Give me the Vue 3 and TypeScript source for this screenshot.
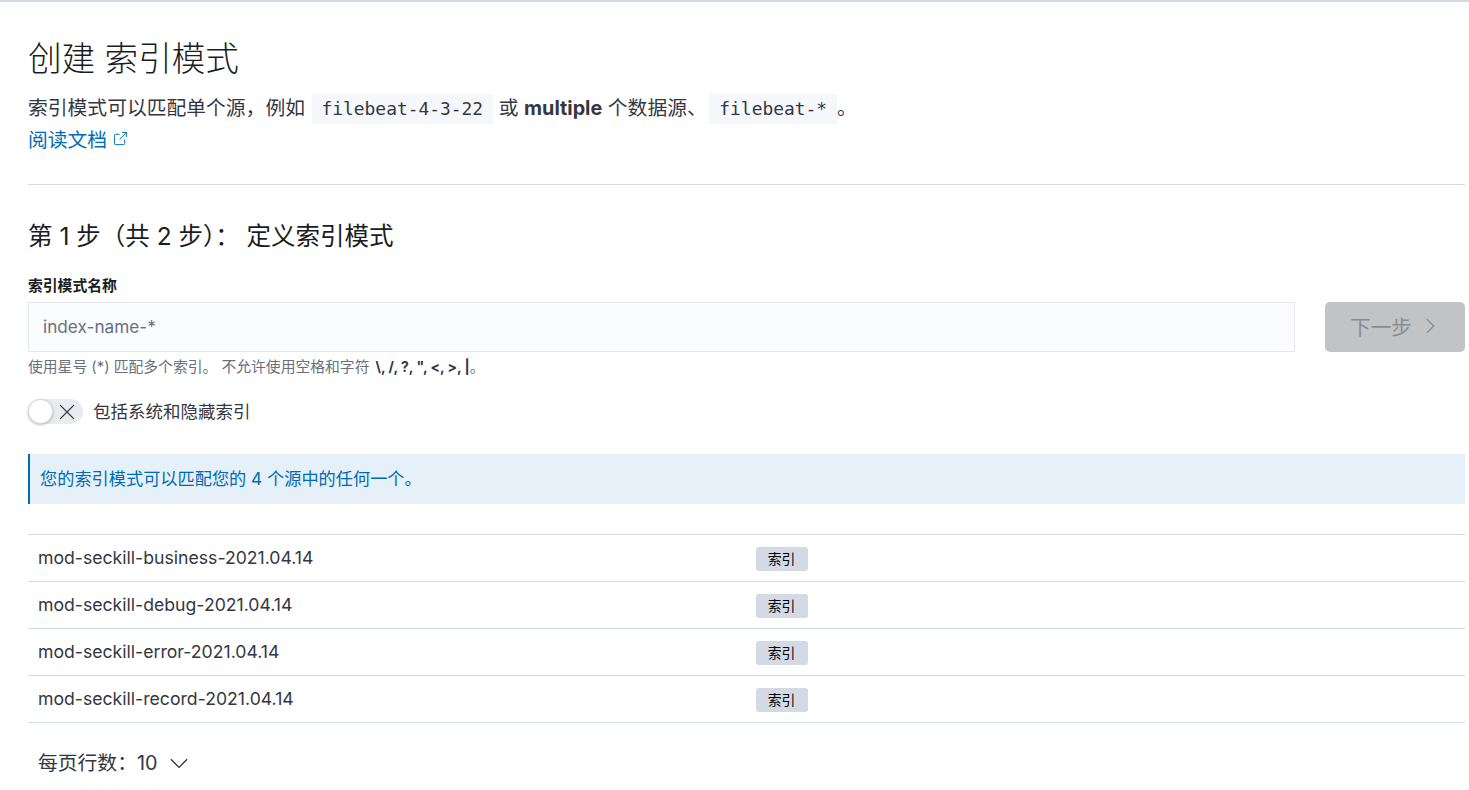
<template>
  <div class="page">
    <h1 class="title">创建 索引模式</h1>
    <p class="intro">
      索引模式可以匹配单个源，例如 <code class="code">filebeat-4-3-22</code> 或 <strong>multiple</strong> 个数据源、 <code class="code code-last">filebeat-*</code>。
    </p>
    <a class="doc-link" href="#">
      阅读文档
      <svg class="ext-icon" viewBox="0 0 16 16" width="15" height="15" fill="none" stroke="currentColor" stroke-width="1">
        <path d="M12.5 9v4.5a1 1 0 0 1-1 1h-9a1 1 0 0 1-1-1v-9a1 1 0 0 1 1-1H7" />
        <path d="M9.5 1.5h5v5M14.5 1.5 7 9" />
      </svg>
    </a>
    <hr class="rule" />

    <h2 class="step-title">第 1 步（共 2 步）： 定义索引模式</h2>

    <label class="field-label">索引模式名称</label>
    <div class="field-row">
      <input class="field-input" type="text" placeholder="index-name-*" />
      <button class="next-btn" type="button" disabled>
        下一步
        <svg viewBox="0 0 16 16" width="20" height="20" fill="none" stroke="currentColor" stroke-width="1.1">
          <path d="M5.5 2.5 11 8l-5.5 5.5" />
        </svg>
      </button>
    </div>
    <p class="help">
      使用星号 (*) 匹配多个索引。 不允许使用空格和字符 <b>\, /, ?, ", &lt;, &gt;, |</b>。
    </p>

    <div class="switch-row">
      <span class="switch">
        <span class="knob"></span>
        <svg class="switch-x" viewBox="0 0 16 16" width="20" height="20" fill="none" stroke="#343741" stroke-width="1.1">
          <path d="M2.5 2.5l11 11M13.5 2.5l-11 11" />
        </svg>
      </span>
      <span class="switch-label">包括系统和隐藏索引</span>
    </div>

    <div class="callout">您的索引模式可以匹配您的 {{ rows.length }} 个源中的任何一个。</div>

    <div class="table">
      <div v-for="row in rows" :key="row" class="table-row">
        <div class="cell">{{ row }}</div>
        <div class="cell cell-type"><span class="badge">索引</span></div>
      </div>
    </div>

    <div class="pager">
      每页行数：10
      <svg viewBox="0 0 16 16" width="20" height="20" fill="none" stroke="#343741" stroke-width="1.1">
        <path d="M1.5 5l6.5 6.5L14.5 5" />
      </svg>
    </div>
  </div>
</template>

<script setup lang="ts">
const rows: string[] = [
  'mod-seckill-business-2021.04.14',
  'mod-seckill-debug-2021.04.14',
  'mod-seckill-error-2021.04.14',
  'mod-seckill-record-2021.04.14'
];
</script>

<style>
html,
body {
  margin: 0;
  background: #fff;
}
</style>

<style scoped>
.page {
  box-sizing: border-box;
  height: 790px;
  overflow: hidden;
  padding: 0 4px 0 28px;
  border-top: 2px solid #d3dae6;
  font-family: Inter, "Noto Sans CJK SC", sans-serif;
  font-size: 17.65px;
  color: #343741;
}

.title {
  margin: 32px 0 0;
  font-size: 33.6px;
  line-height: 50px;
  font-weight: 300;
  color: #1a1c21;
}

.intro {
  margin: 8px 0 0;
  font-size: 19.8px;
  line-height: 32px;
}

.intro strong {
  font-weight: 700;
}

.code {
  display: inline-block;
  margin-left: 1px;
  padding: 0 10px;
  line-height: 30px;
  background: #f5f7fa;
  font-family: "DejaVu Sans Mono", monospace;
  font-size: 17.9px;
  color: #343741;
}

.code-last {
  margin-left: -3px;
}

.doc-link {
  display: flex;
  align-items: center;
  gap: 6px;
  height: 30px;
  margin-top: -1px;
  font-size: 19.8px;
  color: #006bb4;
  text-decoration: none;
}

.rule {
  margin: 31px 0 0;
  border: 0;
  border-top: 1px solid #d3dae6;
}

.step-title {
  margin: 33px 0 0;
  font-size: 24.5px;
  line-height: 36px;
  font-weight: 400;
  color: #1a1c21;
}

.field-label {
  display: block;
  margin-top: 22px;
  font-size: 14.8px;
  line-height: 20px;
  font-weight: 700;
  color: #1a1c21;
}

.field-row {
  display: flex;
  gap: 30px;
  margin-top: 6px;
}

.field-input {
  flex: 1;
  box-sizing: border-box;
  height: 50px;
  padding: 0 14px 2px;
  border: 1px solid #e3e7f3;
  background: #fbfcfd;
  font-family: Inter, "Noto Sans CJK SC", sans-serif;
  font-size: 17.2px;
  color: #343741;
  outline: none;
}

.field-input::placeholder {
  color: #69707d;
  opacity: 1;
}

.next-btn {
  display: flex;
  align-items: center;
  justify-content: center;
  gap: 8px;
  width: 140px;
  height: 50px;
  padding: 0 0 2px;
  border: 0;
  border-radius: 5px;
  background: #c2c3c6;
  font-family: Inter, "Noto Sans CJK SC", sans-serif;
  font-size: 20.5px;
  color: #8b8b8d;
}

.help {
  margin: 5px 0 0;
  font-size: 14.8px;
  line-height: 20px;
  color: #69707d;
}

.help b {
  margin-left: 2px;
  font-size: 14px;
  font-weight: 700;
  color: #343741;
}

.switch-row {
  display: flex;
  align-items: center;
  gap: 10px;
  margin-top: 22px;
}

.switch {
  display: flex;
  align-items: center;
  width: 55px;
  height: 25px;
  border-radius: 13px;
  background: #eaebee;
}

.knob {
  box-sizing: border-box;
  width: 25px;
  height: 25px;
  border-radius: 50%;
  background: #fff;
  border: 1px solid #d3dae6;
  box-shadow: 0 1px 3px rgba(0, 0, 0, 0.25);
}

.switch-x {
  margin-left: 4px;
}

.switch-label {
  font-size: 17.5px;
  line-height: 25px;
}

.callout {
  margin-top: 30px;
  padding: 0 10px;
  height: 50px;
  line-height: 50px;
  border-left: 2px solid #006bb4;
  background: #e6f0f8;
  font-size: 17.2px;
  color: #006bb4;
}

.table {
  margin-top: 30px;
  border-top: 1px solid #d3dae6;
}

.table-row {
  display: grid;
  grid-template-columns: 1fr 1fr;
  height: 46px;
  border-bottom: 1px solid #d3dae6;
}

.cell {
  display: flex;
  align-items: center;
  padding: 0 10px 1px;
}

.cell-type {
  padding: 1px 10px 0 9px;
}

.badge {
  width: 52px;
  height: 24px;
  line-height: 24px;
  text-align: center;
  border-radius: 3px;
  background: #d3dae6;
  font-size: 13.8px;
  color: #000;
}

.pager {
  display: flex;
  align-items: center;
  gap: 12px;
  margin-top: 24px;
  padding-left: 10px;
  font-size: 19.8px;
  line-height: 32px;
}
</style>
